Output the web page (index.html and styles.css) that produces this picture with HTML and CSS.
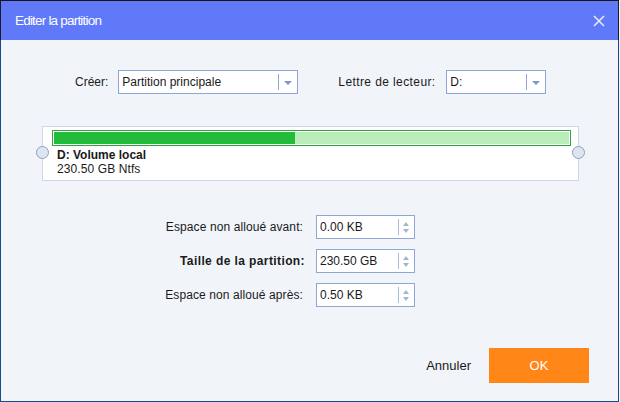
FILE: index.html
```html
<!DOCTYPE html>
<html lang="fr">

<head>
    <meta charset="UTF-8">
    <title>Editer la partition</title>
    <link rel="stylesheet" href="styles.css">
</head>

<body>
    <div class="window">
        <div class="titlebar">
            <span class="title">Editer la partition</span>
            <svg class="close" width="12" height="12" viewBox="0 0 12 12">
                <path d="M1 1 L11 11 M11 1 L1 11" stroke="#e3e8ff" stroke-width="1.6" fill="none" />
            </svg>
        </div>

        <div class="content">
            <div class="top-row">
                <label class="field-label">Créer:</label>
                <div class="select select-type">
                    <span class="select-value">Partition principale</span>
                    <span class="select-arrow"></span>
                </div>
                <label class="field-label letter-label">Lettre de lecteur:</label>
                <div class="select select-letter">
                    <span class="select-value">D:</span>
                    <span class="select-arrow"></span>
                </div>
            </div>

            <div class="partition">
                <span class="handle handle-left"></span>
                <div class="bar">
                    <div class="bar-fill" style="width: 46.8%"></div>
                </div>
                <div class="part-name">D: Volume local</div>
                <div class="part-info">230.50 GB Ntfs</div>
                <span class="handle handle-right"></span>
            </div>

            <div class="sizes">
                <div class="size-row">
                    <label class="size-label">Espace non alloué avant:</label>
                    <div class="spin">
                        <span class="spin-value">0.00 KB</span>
                        <span class="spin-arrows"><i class="up"></i><i class="down"></i></span>
                    </div>
                </div>
                <div class="size-row">
                    <label class="size-label bold">Taille de la partition:</label>
                    <div class="spin">
                        <span class="spin-value">230.50 GB</span>
                        <span class="spin-arrows"><i class="up"></i><i class="down"></i></span>
                    </div>
                </div>
                <div class="size-row">
                    <label class="size-label">Espace non alloué après:</label>
                    <div class="spin">
                        <span class="spin-value">0.50 KB</span>
                        <span class="spin-arrows"><i class="up"></i><i class="down"></i></span>
                    </div>
                </div>
            </div>

            <div class="actions">
                <button class="cancel">Annuler</button>
                <button class="ok">OK</button>
            </div>
        </div>
    </div>
</body>

</html>
```

FILE: styles.css
```css
body {
    margin: 0;
    padding: 0;
    background-color: #f1f5fa;
    font-family: "Liberation Sans", Arial, sans-serif;
    font-size: 12px;
    color: #1a1a1a;
}

.window {
    width: 619px;
    height: 402px;
    box-sizing: border-box;
    border: 1px solid #174d8c;
    border-top: none;
    background-color: #f1f5fa;
    display: flex;
    flex-direction: column;
}

.titlebar {
    height: 40px;
    box-sizing: border-box;
    margin: 0 -1px;
    border-top: 1px solid #151515;
    border-left: 1px solid #1b1b22;
    border-right: 1px solid #1b1b22;
    background-color: #6079f9;
    display: flex;
    align-items: center;
    justify-content: space-between;
    padding: 0 13px 0 14px;
}

.title {
    color: #ffffff;
    font-size: 13.5px;
    letter-spacing: -0.8px;
    padding-bottom: 1px;
}

.close {
    margin-top: 1px;
}

.content {
    flex: 1;
    display: flex;
    flex-direction: column;
}

/* ligne du haut */
.top-row {
    display: flex;
    align-items: center;
    margin-top: 30px;
    padding-left: 74px;
    height: 24px;
}

.field-label {
    margin-right: 10px;
}

.letter-label {
    margin-left: 40px;
    width: 98px;
    letter-spacing: 0.4px;
}

.select {
    height: 24px;
    box-sizing: border-box;
    border: 1px solid #8ea5d5;
    background: #ffffff;
    display: flex;
    align-items: center;
    position: relative;
}

.select-type {
    width: 180px;
}

.select-letter {
    width: 100px;
}

.select-value {
    flex: 1;
    padding-left: 3px;
}

.select-arrow {
    width: 18px;
    height: 16px;
    border-left: 1px solid #8ea5d5;
    position: relative;
}

.select-arrow::after {
    content: "";
    position: absolute;
    left: 5px;
    top: 7px;
    border-left: 4px solid transparent;
    border-right: 4px solid transparent;
    border-top: 4px solid #8396c4;
}

/* partition */
.partition {
    position: relative;
    margin: 32px 0 0 41px;
    width: 537px;
    height: 55px;
    box-sizing: border-box;
    border: 1px solid #cbd6ea;
    background: #ffffff;
    padding: 3px 7px 0 9px;
}

.bar {
    height: 16px;
    box-sizing: border-box;
    border: 1px solid #2ea83e;
    padding: 1px;
    background: #bbedbb;
    box-shadow: inset 0 0 0 1px #ffffff;
}

.bar-fill {
    height: 100%;
    background: #22bb3a;
}

.part-name {
    font-weight: bold;
    margin: 2px 0 0 5px;
    line-height: 14px;
}

.part-info {
    margin-left: 5px;
    line-height: 14px;
    letter-spacing: 0.1px;
}

.handle {
    position: absolute;
    top: 19px;
    width: 11px;
    height: 11px;
    border-radius: 50%;
    border: 1px solid #8ea0be;
    background: #dde5f1;
}

.handle-left {
    left: -7px;
}

.handle-right {
    right: -7px;
}

/* tailles */
.sizes {
    margin-top: 34px;
    display: flex;
    flex-direction: column;
    gap: 10px;
}

.size-row {
    display: flex;
    align-items: center;
    height: 24px;
}

.size-label {
    width: 302px;
    text-align: right;
    margin-right: 13px;
    letter-spacing: 0.1px;
}

.bold {
    font-weight: bold;
    letter-spacing: 0.4px;
    width: 304px;
    margin-right: 11px;
}

.spin {
    width: 99px;
    height: 24px;
    box-sizing: border-box;
    border: 1px solid #8ea5d5;
    background: #ffffff;
    display: flex;
    align-items: center;
}

.spin-value {
    flex: 1;
    padding-left: 3px;
}

.spin-arrows {
    width: 15px;
    height: 16px;
    border-left: 1px solid #a9bbe0;
    position: relative;
}

.spin-arrows i {
    position: absolute;
    left: 4px;
    border-left: 3px solid transparent;
    border-right: 3px solid transparent;
}

.spin-arrows .up {
    top: 3px;
    border-bottom: 4px solid #a6b4cf;
}

.spin-arrows .down {
    top: 10px;
    border-top: 4px solid #a6b4cf;
}

/* boutons */
.actions {
    margin-top: 41px;
    display: flex;
    align-items: center;
    justify-content: flex-end;
    padding-right: 29px;
}

button {
    font-family: "Liberation Sans", Arial, sans-serif;
    font-size: 13px;
    border: none;
    cursor: pointer;
}

.cancel {
    background: transparent;
    color: #1a1a1a;
    padding: 0;
    margin-right: 18px;
}

.ok {
    width: 100px;
    height: 35px;
    background-color: #ff8617;
    color: #ffffff;
}
```
